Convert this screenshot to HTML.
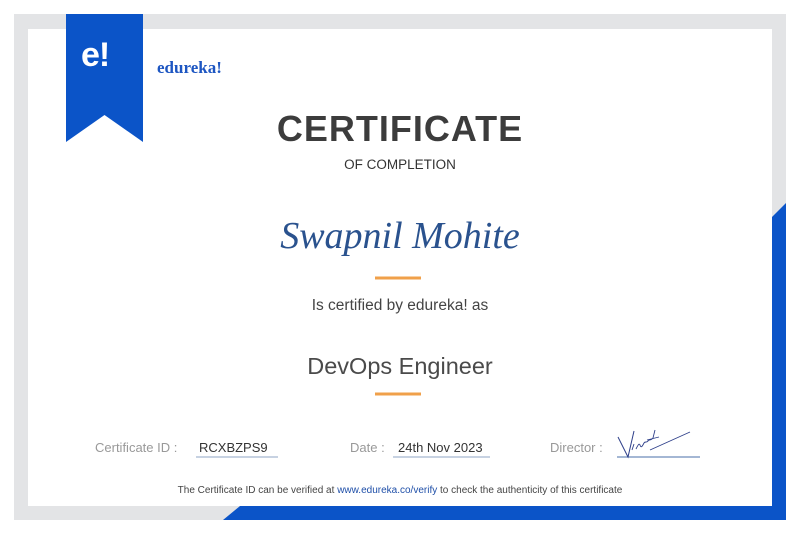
<!DOCTYPE html>
<html><head><meta charset="utf-8">
<style>
html,body{margin:0;padding:0;background:#fff;}
body{width:800px;height:547px;position:relative;overflow:hidden;font-family:"Liberation Sans",sans-serif;}
.a{position:absolute;white-space:nowrap;}
.c{left:0;width:800px;text-align:center;}
</style></head><body>
<svg class="a" style="left:0;top:0" width="800" height="547">
  <rect x="14" y="14" width="772" height="506" fill="#e3e4e6"/>
  <rect x="28" y="29" width="744" height="477" fill="#fff"/>
  <polygon points="786,203 786,520 772,520 772,217" fill="#0b54c8"/>
  <polygon points="240,506 786,506 786,520 223,520" fill="#0b54c8"/>
  <polygon points="66,14 143,14 143,142 104.5,115 66,142" fill="#0b54c8"/>
  <line x1="375" y1="278" x2="421" y2="278" stroke="#f0a04a" stroke-width="3"/>
  <line x1="375" y1="394" x2="421" y2="394" stroke="#f0a04a" stroke-width="3"/>
  <line x1="196" y1="457" x2="278" y2="457" stroke="#8fa6c6" stroke-width="1"/>
  <line x1="393" y1="457" x2="490" y2="457" stroke="#8fa6c6" stroke-width="1"/>
  <line x1="617" y1="457" x2="700" y2="457" stroke="#4a6fa8" stroke-width="1"/>
  <path d="M618,437 L628,457 L634,431" fill="none" stroke="#2e3f8a" stroke-width="1"/>
  <path d="M632,450 l2,-6 M636,449 c2,-4 3,-6 4,-4 c1,3 2,2 4,-2 c1,-2 3,0 4,-2 c1,-2 3,0 5,-3 l2,-8 M647,440 l12,-3 M650,450 L690,432" fill="none" stroke="#2e3f8a" stroke-width="0.9"/>
</svg>
<div class="a" style="left:81px;top:36px;font-size:34px;font-weight:bold;color:#fff;letter-spacing:-1px">e!</div>
<div class="a" style="left:157px;top:58px;font-family:'Liberation Serif',serif;font-size:17px;font-weight:bold;color:#1d56c2">edureka!</div>
<div class="a c" style="top:108px;font-size:36px;font-weight:bold;color:#3c3c3c;letter-spacing:1px">CERTIFICATE</div>
<div class="a c" style="top:157px;font-size:13.5px;color:#333">OF COMPLETION</div>
<div class="a c" style="top:214px;font-family:'Liberation Serif',serif;font-style:italic;font-size:38px;color:#2a528e">Swapnil Mohite</div>
<div class="a c" style="top:297px;font-size:15.5px;color:#444">Is certified by edureka! as</div>
<div class="a c" style="top:353px;font-size:23.5px;color:#4a4a4a">DevOps Engineer</div>
<div class="a" style="left:95px;top:440px;font-size:13px;color:#999">Certificate ID :</div>
<div class="a" style="left:199px;top:440px;font-size:13px;color:#333">RCXBZPS9</div>
<div class="a" style="left:350px;top:440px;font-size:13px;color:#999">Date :</div>
<div class="a" style="left:398px;top:440px;font-size:13px;color:#333">24th Nov 2023</div>
<div class="a" style="left:550px;top:440px;font-size:13px;color:#999">Director :</div>
<div class="a c" style="top:485px;font-size:10px;color:#444">The Certificate ID can be verified at <span style="color:#1f4fa8">www.edureka.co/verify</span> to check the authenticity of this certificate</div>
</body></html>
